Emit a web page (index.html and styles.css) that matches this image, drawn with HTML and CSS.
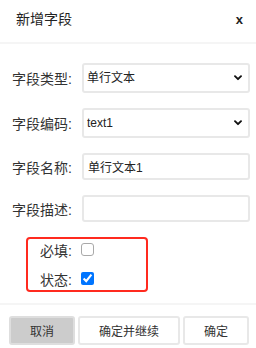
FILE: index.html
```html
<!DOCTYPE html>
<html lang="zh-CN">
<head>
<meta charset="utf-8">
<title>新增字段</title>
<link rel="stylesheet" href="styles.css">
</head>
<body>
<div class="dialog">
  <div class="header">
    <span class="title">新增字段</span>
    <span class="close">x</span>
  </div>
  <div class="body">
    <div class="row row-select">
      <label class="label">字段类型:</label>
      <div class="select-wrap">
        <select class="field select">
          <option>单行文本</option>
        </select>
        <svg class="chevron" width="8" height="6" viewBox="0 0 8 6"><path d="M1 1.2 L4 4.2 L7 1.2" fill="none" stroke="#111" stroke-width="1.9" stroke-linecap="round" stroke-linejoin="round"/></svg>
      </div>
    </div>
    <div class="row row-select">
      <label class="label">字段编码:</label>
      <div class="select-wrap">
        <select class="field select">
          <option>text1</option>
        </select>
        <svg class="chevron" width="8" height="6" viewBox="0 0 8 6"><path d="M1 1.2 L4 4.2 L7 1.2" fill="none" stroke="#111" stroke-width="1.9" stroke-linecap="round" stroke-linejoin="round"/></svg>
      </div>
    </div>
    <div class="row row-input">
      <label class="label">字段名称:</label>
      <input class="field input" type="text" value="单行文本1">
    </div>
    <div class="row row-input">
      <label class="label">字段描述:</label>
      <input class="field input" type="text" value="">
    </div>
    <div class="highlight">
      <div class="check-row">
        <label class="check-label">必填:</label>
        <input class="check check-off" type="checkbox">
      </div>
      <div class="check-row">
        <label class="check-label">状态:</label>
        <input class="check" type="checkbox" checked>
      </div>
    </div>
  </div>
  <div class="footer">
    <button class="btn btn-cancel">取消</button>
    <button class="btn">确定并继续</button>
    <button class="btn">确定</button>
  </div>
</div>
</body>
</html>
```

FILE: styles.css
```css
* {
  box-sizing: border-box;
}

html, body {
  margin: 0;
  padding: 0;
  background: #ffffff;
}

body {
  font-family: "Liberation Sans", "Noto Sans CJK SC", sans-serif;
  color: #333333;
  width: 256px;
  height: 348px;
  overflow: hidden;
}

.dialog {
  display: flex;
  flex-direction: column;
}

.header {
  height: 44px;
  display: flex;
  align-items: flex-start;
  justify-content: space-between;
  padding: 9px 13px 0 16px;
  border-bottom: 2px solid #f5f5f5;
}

.title {
  font-size: 14px;
  line-height: 20px;
  color: #222222;
}

.close {
  font-size: 13px;
  font-weight: bold;
  line-height: 20px;
  color: #222222;
  padding-top: 1px;
}

.body {
  padding: 19px 0 0 0;
  display: flex;
  flex-direction: column;
}

.row {
  display: flex;
  align-items: center;
  margin-bottom: 15px;
}

.row-select {
  height: 30px;
}

.row-input {
  height: 27px;
}

.row-input:last-of-type {
  margin-bottom: 7px;
}

.label {
  width: 72px;
  text-align: right;
  font-size: 14px;
  color: #333333;
  flex: none;
}

.select-wrap {
  position: relative;
  margin-left: 10px;
  width: 168px;
  height: 100%;
}

.field {
  margin: 0 0 0 10px;
  width: 168px;
  height: 100%;
  border: 2px solid #e8e8e8;
  border-radius: 3px;
  background: #ffffff;
  font-family: "Liberation Sans", "Noto Sans CJK SC", sans-serif;
  font-size: 12px;
  color: #222222;
  outline: none;
}

.select {
  margin: 0;
  width: 100%;
  padding: 0 0 0 3px;
  appearance: none;
  -webkit-appearance: none;
}

.chevron {
  position: absolute;
  right: 8px;
  top: 12px;
  pointer-events: none;
}

.input {
  padding: 0 4px;
}

.highlight {
  margin-left: 26px;
  width: 122px;
  height: 55px;
  border: 2px solid #ff2a1f;
  border-radius: 4px;
  padding: 0 0 1px 0;
  display: flex;
  flex-direction: column;
  gap: 8px;
}

.check-row {
  height: 21px;
  display: flex;
  align-items: center;
}

.check-label {
  width: 44px;
  text-align: right;
  font-size: 14px;
  color: #333333;
  flex: none;
}

.check {
  margin: 0 0 0 9px;
  width: 13px;
  height: 13px;
}

.check-off {
  appearance: none;
  -webkit-appearance: none;
  border: 1px solid #a9a9a9;
  border-radius: 3px;
  background: #ffffff;
}

.footer {
  margin-top: 11px;
  border-top: 2px solid #f5f5f5;
  padding: 11px 7px 11px 9px;
  display: flex;
  justify-content: space-between;
}

.btn {
  height: 29px;
  padding: 0 19px;
  border: 2px solid #e8e8e8;
  border-radius: 3px;
  background: #ffffff;
  font-family: "Liberation Sans", "Noto Sans CJK SC", sans-serif;
  font-size: 12px;
  color: #333333;
}

.btn-cancel {
  background: #cccccc;
  border-color: #dedede;
}
```
